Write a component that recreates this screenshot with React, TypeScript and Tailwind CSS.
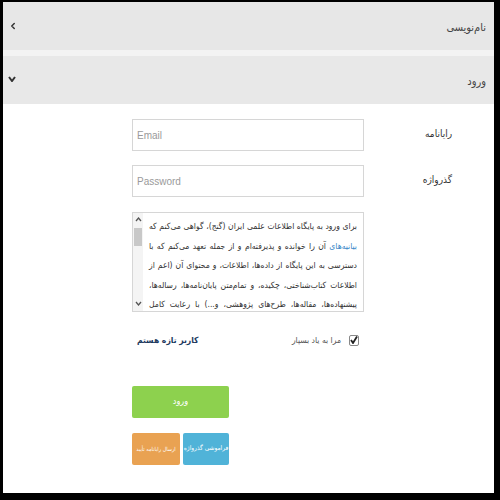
import { ChevronLeft } from 'lucide-react';

const fa = { fontFamily: '"DejaVu Sans Condensed", "DejaVu Sans", "Noto Sans", sans-serif' };

const terms =
  'برای ورود به پایگاه اطلاعات علمی ایران (گنج)، گواهی می‌کنم که ';
const termsRest =
  ' آن را خوانده و پذیرفته‌ام و از جمله تعهد می‌کنم که با دسترسی به این پایگاه از داده‌ها، اطلاعات، و محتوای آن (اعم از اطلاعات کتاب‌شناختی، چکیده، و تمام‌متن پایان‌نامه‌ها، رساله‌ها، پیشنهاده‌ها، مقاله‌ها، طرح‌های پژوهشی، و...) با رعایت کامل حقوق پدیدآوران و تنها برای هدف‌های علمی، آموزشی، و پژوهشی و بر پایه قانون حمایت از مؤلفان، مصنفان، و هنرمندان (۱۳۴۸) و الحاقات و اصلاحات آن استفاده کنم.';

function Field({ label, placeholder }: { label: string; placeholder: string }) {
  return (
    <div className="flex items-start">
      <label className="w-[88px] pt-[7px] text-[10px] text-[#333]">{label}</label>
      <input
        type="text"
        placeholder={placeholder}
        dir="ltr"
        className="w-[232px] h-[32px] px-[4px] border border-[#d6d6d6] bg-white text-[10px] placeholder:text-[#9a9a9a] focus:outline-none"
        style={{ fontFamily: '"Liberation Sans Narrow", "Liberation Sans", sans-serif' }}
      />
    </div>
  );
}

export default function App() {
  return (
    <div className="w-[500px] h-[500px] bg-black pt-[2px] pl-[3px] pr-[6px] pb-[7px]">
      <div dir="rtl" className="h-full bg-white flex flex-col overflow-hidden" style={fa}>
        {/* collapsed panel */}
        <div className="h-[48px] bg-[#e7e7e7] flex items-center justify-between pr-[8px] pl-[5px]">
          <span className="text-[11px] text-[#444] pt-[4px]">نام‌نویسی</span>
          <ChevronLeft size={10} strokeWidth={3.5} className="text-[#333]" />
        </div>
        <div className="h-[6px] bg-[#f3f3f3]" />
        {/* open panel */}
        <div className="h-[48px] bg-[#e8e8e8] flex items-center justify-between pr-[8px] pl-[5px]">
          <span className="text-[11px] text-[#444] pt-[4px]">ورود</span>
          <svg width="8" height="6" viewBox="0 0 8 6" className="-mt-[2px]">
            <path d="M1 1 L4 5 L7 1" fill="none" stroke="#333" strokeWidth="2" />
          </svg>
        </div>

        <div className="flex-1 flex flex-col pr-[42px] pt-[15px]">
          <Field label="رایانامه" placeholder="Email" />
          <div className="h-[14px]" />
          <Field label="گذرواژه" placeholder="Password" />

          <div className="flex mt-[15px]">
            <div className="w-[88px]" />
            <div className="w-[232px] flex flex-col">
              {/* terms box with scrollbar on the left */}
              <div className="h-[100px] border border-[#d6d6d6] flex">
                <div className="flex-1 overflow-hidden px-[6px] pt-[4px] text-[8.5px] leading-[19.5px] text-[#333] text-justify">
                  {terms}
                  <span className="text-[#3a87c8]">بیانیه‌های</span>
                  {termsRest}
                </div>
                <div className="w-[10px] bg-[#f4f4f4] flex flex-col items-center">
                  <svg width="7" height="5" viewBox="0 0 7 5" className="mt-[4px]">
                    <path d="M1 4 L3.5 1 L6 4" fill="none" stroke="#555" strokeWidth="1.3" />
                  </svg>
                  <div className="w-[8px] h-[18px] bg-[#c8c8c8] mt-[6px]" />
                  <div className="flex-1" />
                  <svg width="7" height="5" viewBox="0 0 7 5" className="mb-[5px]">
                    <path d="M1 1 L3.5 4 L6 1" fill="none" stroke="#555" strokeWidth="1.3" />
                  </svg>
                </div>
              </div>

              <div className="flex items-center justify-between mt-[22px] pr-[5px] pl-[5px]">
                <label className="flex items-center gap-[8px]">
                  <span className="w-[10px] h-[11px] border border-[#888] rounded-[2px] flex items-center justify-center">
                    <svg width="8" height="8" viewBox="0 0 8 8">
                      <path d="M1 4 L3 7 L7 0.5" fill="none" stroke="#222" strokeWidth="1.8" />
                    </svg>
                  </span>
                  <span className="text-[8.5px] text-[#555]">مرا به یاد بسپار</span>
                </label>
                <a className="text-[8.5px] font-bold text-[#1d3a5e]">کاربر تازه هستم</a>
              </div>

              <div className="self-end w-[97px] flex flex-col gap-[15px] mt-[39px]">
                <button className="h-[32px] bg-[#8dd14e] rounded-[2px] text-white text-[9px]">ورود</button>
                <div className="flex gap-[3px]">
                  <button className="w-[46px] h-[32px] overflow-hidden bg-[#50b3d8] rounded-[2px] text-white text-[6.5px] whitespace-nowrap">
                    فراموشی گذرواژه
                  </button>
                  <button className="w-[48px] h-[32px] overflow-hidden bg-[#e9a252] rounded-[2px] text-white text-[5.5px] whitespace-nowrap">
                    ارسال رایانامه تأیید
                  </button>
                </div>
              </div>
            </div>
          </div>
        </div>
      </div>
    </div>
  );
}
